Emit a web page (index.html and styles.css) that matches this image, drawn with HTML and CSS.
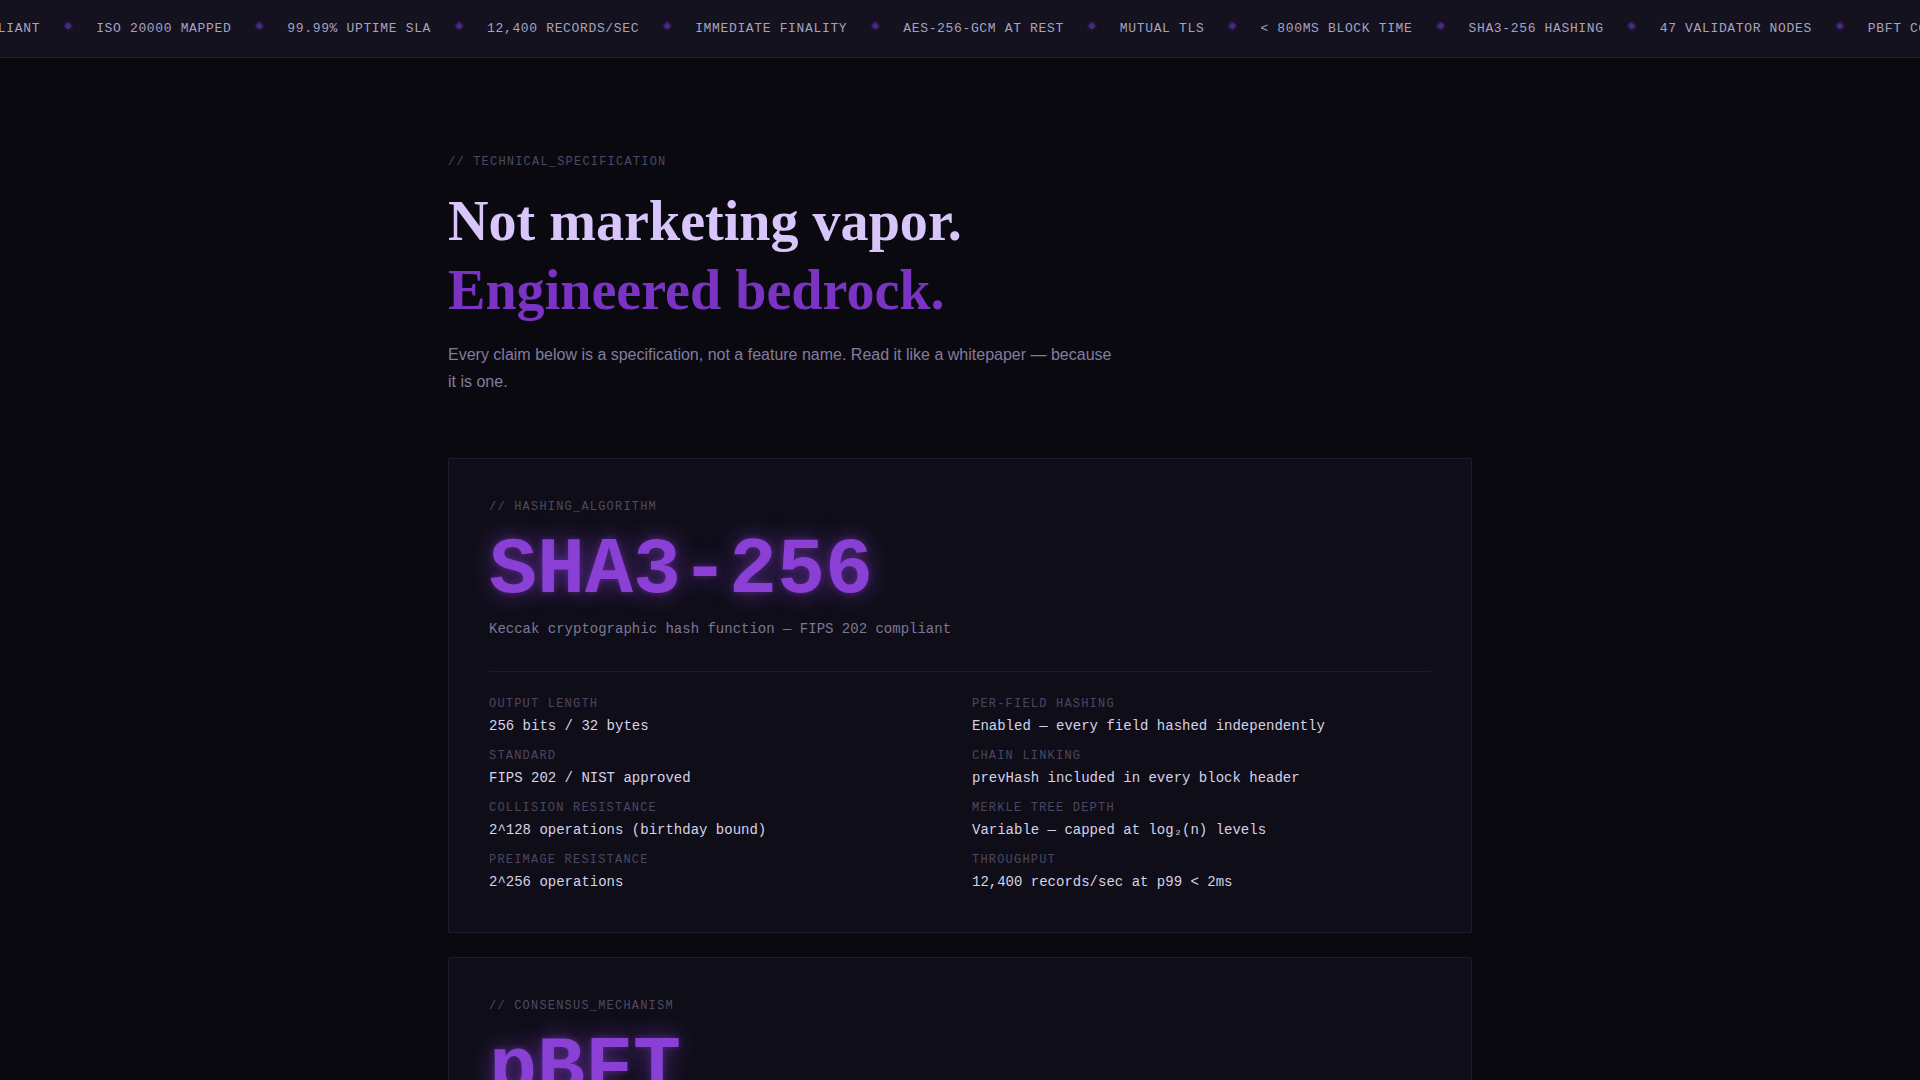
FILE: index.html
```html
<!DOCTYPE html>
<html lang="en">
<head>
<meta charset="utf-8">
<title>Technical Specification</title>
<link rel="stylesheet" href="styles.css">
</head>
<body>
<div class="ticker">
  <div class="ticker-track">
    <span class="tick">FIPS 202 COMPLIANT</span><span class="sep">◆</span>
    <span class="tick">ISO 20000 MAPPED</span><span class="sep">◆</span>
    <span class="tick">99.99% UPTIME SLA</span><span class="sep">◆</span>
    <span class="tick">12,400 RECORDS/SEC</span><span class="sep">◆</span>
    <span class="tick">IMMEDIATE FINALITY</span><span class="sep">◆</span>
    <span class="tick">AES-256-GCM AT REST</span><span class="sep">◆</span>
    <span class="tick">MUTUAL TLS</span><span class="sep">◆</span>
    <span class="tick">&lt; 800MS BLOCK TIME</span><span class="sep">◆</span>
    <span class="tick">SHA3-256 HASHING</span><span class="sep">◆</span>
    <span class="tick">47 VALIDATOR NODES</span><span class="sep">◆</span>
    <span class="tick">PBFT CONSENSUS</span><span class="sep">◆</span>
    <span class="tick">FIPS 202 COMPLIANT</span>
  </div>
</div>

<main class="spec">
  <div class="eyebrow">// TECHNICAL_SPECIFICATION</div>
  <h1 class="title">
    <span class="title-a">Not marketing vapor.</span>
    <span class="title-b">Engineered bedrock.</span>
  </h1>
  <p class="lede">Every claim below is a specification, not a feature name. Read it like a whitepaper — because it is one.</p>

  <section class="card">
    <div class="card-label">// HASHING_ALGORITHM</div>
    <div class="card-hero">SHA3-256</div>
    <div class="card-sub">Keccak cryptographic hash function — FIPS 202 compliant</div>
    <div class="divider"></div>
    <div class="grid">
      <div class="item"><div class="k">OUTPUT LENGTH</div><div class="v">256 bits / 32 bytes</div></div>
      <div class="item"><div class="k">PER-FIELD HASHING</div><div class="v">Enabled — every field hashed independently</div></div>
      <div class="item"><div class="k">STANDARD</div><div class="v">FIPS 202 / NIST approved</div></div>
      <div class="item"><div class="k">CHAIN LINKING</div><div class="v">prevHash included in every block header</div></div>
      <div class="item"><div class="k">COLLISION RESISTANCE</div><div class="v">2^128 operations (birthday bound)</div></div>
      <div class="item"><div class="k">MERKLE TREE DEPTH</div><div class="v">Variable — capped at log₂(n) levels</div></div>
      <div class="item"><div class="k">PREIMAGE RESISTANCE</div><div class="v">2^256 operations</div></div>
      <div class="item"><div class="k">THROUGHPUT</div><div class="v">12,400 records/sec at p99 &lt; 2ms</div></div>
    </div>
  </section>

  <section class="card">
    <div class="card-label">// CONSENSUS_MECHANISM</div>
    <div class="card-hero">pBFT</div>
    <div class="card-sub">Practical Byzantine Fault Tolerance — immediate finality</div>
  </section>
</main>
</body>
</html>
```

FILE: styles.css
```css
* { box-sizing: border-box; }

html, body {
  margin: 0;
  padding: 0;
  background: #0a0910;
  color: #d6d2e8;
  font-family: "Liberation Mono", "DejaVu Sans Mono", monospace;
}

body { min-height: 100vh; }

.ticker {
  height: 58px;
  background: #13121e;
  border-bottom: 1px solid #1f1d30;
  overflow: hidden;
  display: flex;
  align-items: center;
}

.ticker-track {
  display: flex;
  align-items: center;
  gap: 24px;
  white-space: nowrap;
  margin-left: -112px;
  font-size: 13px;
  letter-spacing: 0.05em;
  color: #a8a2c0;
}

.tick { line-height: 16px; }

.sep {
  width: 8px;
  font-size: 12px;
  letter-spacing: 0;
  color: #4a2883;
  text-align: center;
  margin-top: -7px;
  text-shadow: 0 0 4px rgba(110, 60, 190, 0.55);
}

.spec {
  width: 1024px;
  margin: 0 auto;
  padding: 96px 0 40px;
}

.eyebrow,
.card-label {
  font-size: 12px;
  line-height: 16px;
  letter-spacing: 0.1em;
  color: #4e4a63;
}

.title {
  margin: 17px 0 16px;
  font-family: "Liberation Serif", "Times New Roman", serif;
  font-weight: 700;
  font-size: 56.1px;
  line-height: 69px;
}

.title span { display: block; }
.title-a { color: #d8c5fa; }
.title-b { color: #7a33c3; }

.lede {
  margin: 0 0 63px;
  max-width: 672px;
  font-family: "Liberation Sans", Arial, sans-serif;
  font-size: 16px;
  line-height: 27px;
  color: #847c9d;
}

.card {
  background: #0f0e18;
  border: 1px solid #1f1c30;
  border-radius: 2px;
  padding: 40px;
  margin-bottom: 24px;
}

.card-hero {
  margin-top: 16px;
  font-size: 80px;
  line-height: 1;
  font-weight: 700;
  color: #8a3fd5;
  text-shadow: 0 0 24px rgba(138, 63, 213, 0.6), 0 0 6px rgba(138, 63, 213, 0.4);
}

.card-sub {
  margin-top: 8px;
  font-size: 14px;
  line-height: 20px;
  color: #7c7794;
}

.divider {
  height: 1px;
  background: #1c1a2c;
  margin: 32px 0 24px;
}

.grid {
  display: grid;
  grid-template-columns: 1fr 1fr;
  column-gap: 24px;
  row-gap: 12px;
}

.k {
  font-size: 12px;
  line-height: 16px;
  letter-spacing: 0.1em;
  color: #4b4760;
}

.v {
  margin-top: 4px;
  font-size: 14px;
  line-height: 20px;
  color: #d6d2e8;
}
```
